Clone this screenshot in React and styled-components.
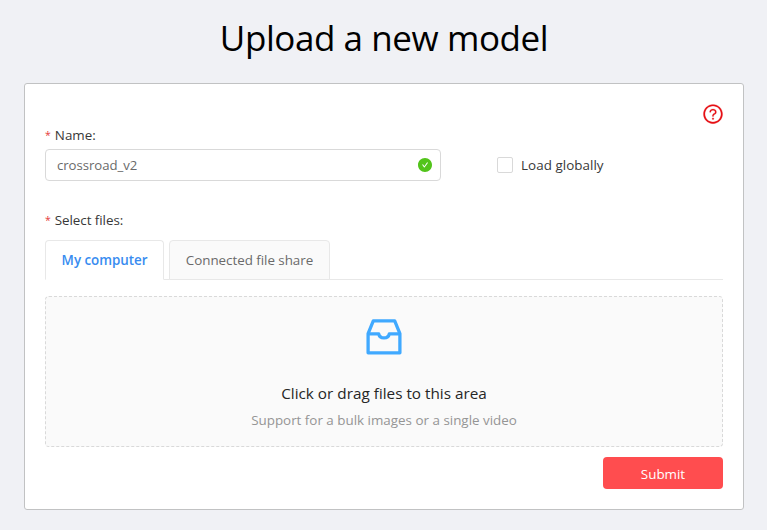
import React from 'react';
import styled, { createGlobalStyle } from 'styled-components';
import { AiFillCheckCircle, AiOutlineQuestionCircle } from 'react-icons/ai';

const GlobalStyle = createGlobalStyle`
  * { box-sizing: border-box; }
  body {
    margin: 0;
    background: #f0f1f5;
    color: #383838;
    font: 13.4px/22px "Open Sans", "Noto Sans", sans-serif;
  }
  button, input { font: inherit; }
`;

const Page = styled.main`
  height: 530px;
  padding: 0 23px 0 24px;
  overflow: hidden;
`;

const Title = styled.h1`
  margin: 0;
  height: 83px;
  padding-top: 11px;
  color: #000;
  font-size: 35px;
  font-weight: 400;
  line-height: 54px;
  letter-spacing: -0.43px;
  text-align: center;
`;

const Card = styled.form`
  display: flex;
  flex-direction: column;
  height: 427px;
  padding: 19px 20px 20px;
  background: #fff;
  border: 1px solid #c1c2c3;
  border-radius: 3px;
`;

const HelpRow = styled.div`
  display: flex;
  justify-content: flex-end;
  height: 21px;
  margin-right: -1px;
`;

const HelpIcon = styled(AiOutlineQuestionCircle)`
  flex: none;
  width: 22px;
  height: 22px;
  color: #e60f14;
  stroke-width: 9px;
`;

const Label = styled.label`
  display: flex;
  gap: 4px;
  height: 22px;
`;

const Required = styled.span`
  color: #e5383b;
  font-size: 10.5px;
`;

const NameRow = styled.div`
  display: flex;
  align-items: center;
  gap: 56px;
  margin-top: 3px;
`;

const InputBox = styled.div`
  display: flex;
  align-items: center;
  width: 396px;
  height: 32px;
  padding: 0 7px 0 11px;
  border: 1px solid #d9d9d9;
  border-radius: 4px;
  color: #52c41a;
  font-size: 16px;
`;

const TextInput = styled.input`
  flex: 1;
  min-width: 0;
  padding: 0;
  border: 0;
  outline: 0;
  color: #6a6a6a;
  background: transparent;
  font-size: 13.2px;
  letter-spacing: -0.05px;
`;

const CheckOption = styled.label`
  display: flex;
  align-items: center;
  gap: 8px;
  letter-spacing: 0.05px;
`;

const Checkbox = styled.input`
  appearance: none;
  width: 16px;
  height: 16px;
  margin: 0;
  border: 1px solid #d9d9d9;
  border-radius: 2px;
  background: #fff;
`;

const FilesLabel = styled(Label)`
  margin-top: 28px;
  letter-spacing: -0.05px;
`;

const Tabs = styled.div`
  display: flex;
  gap: 5px;
  height: 40px;
  margin-top: 9px;
  border-bottom: 1px solid #e8e8e8;
`;

const Tab = styled.button`
  width: ${({ $width }) => $width}px;
  height: 40px;
  padding: 0;
  border: 1px solid #e8e8e8;
  border-bottom-color: ${({ $active }) => ($active ? '#fff' : '#e8e8e8')};
  border-radius: 4px 4px 0 0;
  background: ${({ $active }) => ($active ? '#fff' : '#fafafa')};
  color: ${({ $active }) => ($active ? '#388cf0' : '#6a6a6a')};
  font-weight: ${({ $active }) => ($active ? 600 : 400)};
  letter-spacing: -0.04px;
`;

const DropZone = styled.div`
  display: flex;
  flex-direction: column;
  align-items: center;
  height: 151px;
  margin-top: 16px;
  padding-top: 16px;
  border: 1px dashed #d9d9d9;
  border-radius: 4px;
  background: #fafafa;
`;

const DropIcon = styled.svg`
  flex: none;
  width: 48px;
  height: 48px;
  fill: none;
  stroke: #40a9ff;
  stroke-width: 3.3px;
  stroke-linejoin: round;
`;

const DropTitle = styled.p`
  margin: 20px 0 4px;
  color: #262626;
  font-size: 15.3px;
  line-height: 24px;
`;

const DropHint = styled.p`
  margin: 0;
  color: #959595;
`;

const Submit = styled.button`
  align-self: flex-end;
  width: 120px;
  height: 32px;
  margin-top: 10px;
  padding: 2px 0 0;
  border: 0;
  border-radius: 4px;
  background: #ff4d4f;
  color: #fff;
`;

function InboxIcon() {
  return (
    <DropIcon viewBox="0 0 48 48" aria-hidden="true">
      <path d="M8.1 20.6 13.3 7.8H34.7L39.9 20.6V39.8H8.1Z" />
      <path d="M8.1 20.8H18.7A5.4 5.1 0 0 0 29.3 20.8H39.9" />
    </DropIcon>
  );
}

export default function App() {
  return (
    <>
      <GlobalStyle />
      <Page>
        <Title>Upload a new model</Title>
        <Card onSubmit={(e) => e.preventDefault()}>
          <HelpRow><HelpIcon /></HelpRow>
          <Label htmlFor="name"><Required>*</Required>Name:</Label>
          <NameRow>
            <InputBox>
              <TextInput id="name" defaultValue="crossroad_v2" />
              <AiFillCheckCircle />
            </InputBox>
            <CheckOption><Checkbox type="checkbox" />Load globally</CheckOption>
          </NameRow>
          <FilesLabel as="div"><Required>*</Required>Select files:</FilesLabel>
          <Tabs>
            <Tab type="button" $width={119} $active>My computer</Tab>
            <Tab type="button" $width={161}>Connected file share</Tab>
          </Tabs>
          <DropZone>
            <InboxIcon />
            <DropTitle>Click or drag files to this area</DropTitle>
            <DropHint>Support for a bulk images or a single video</DropHint>
          </DropZone>
          <Submit type="submit">Submit</Submit>
        </Card>
      </Page>
    </>
  );
}
